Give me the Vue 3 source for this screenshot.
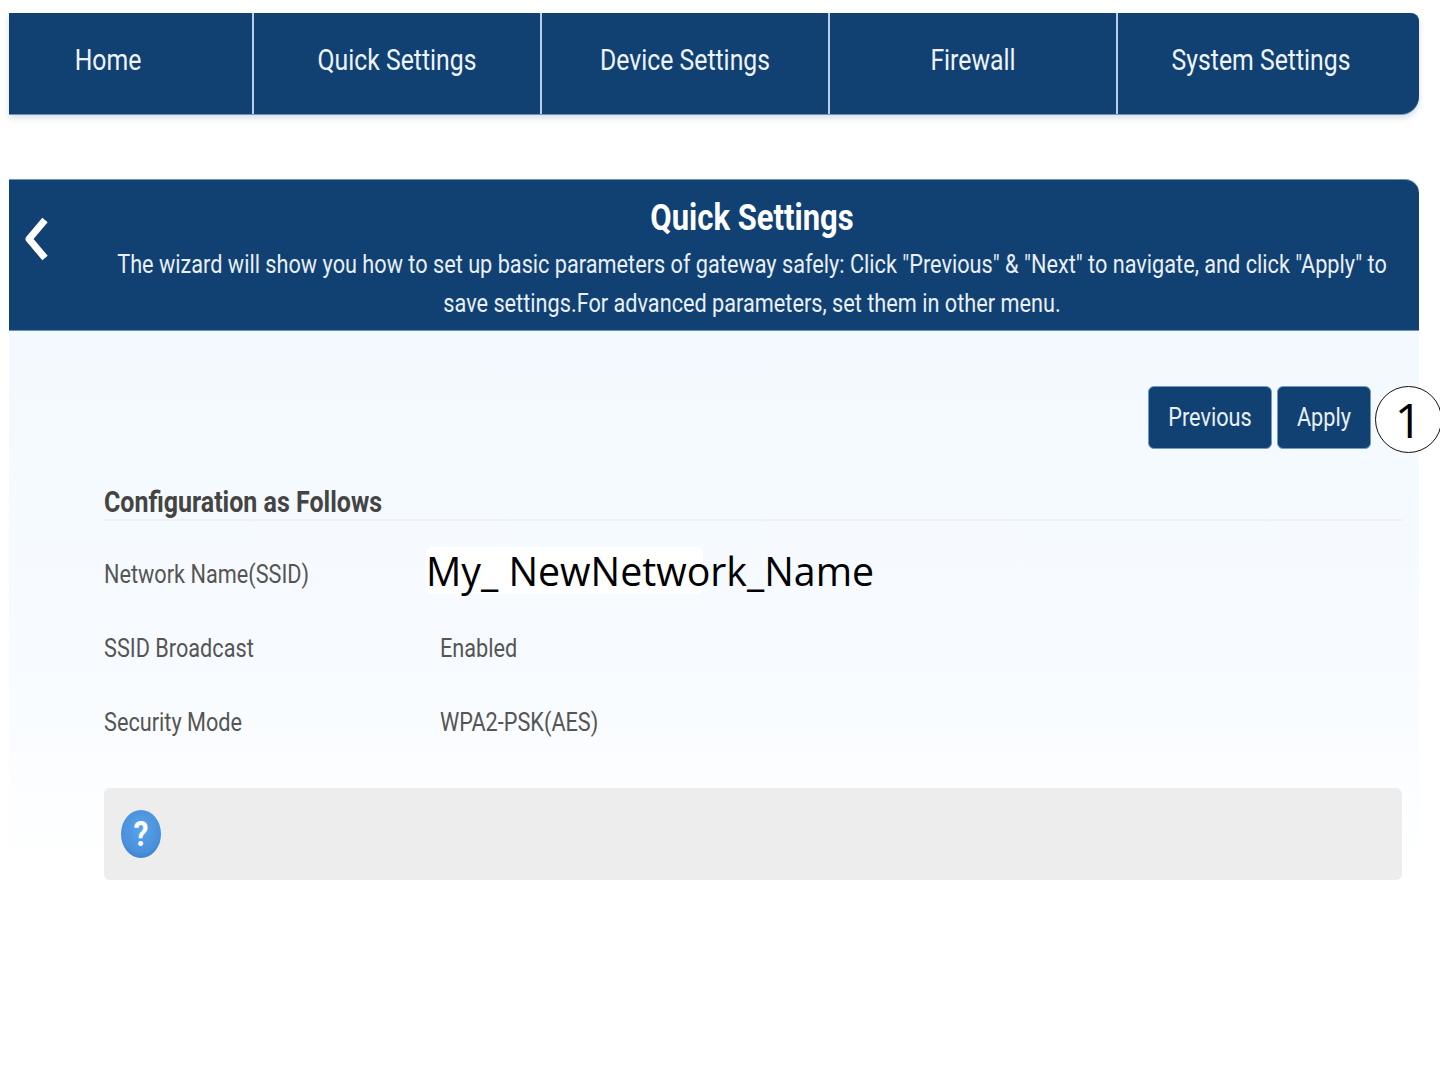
<template>
  <div class="page">
    <nav class="nav">
      <a v-for="item in menu" :key="item" class="nav-item"><span class="tall">{{ item }}</span></a>
    </nav>

    <section class="panel">
      <header class="panel-head">
        <svg class="back" width="26" height="46" viewBox="0 0 26 46">
          <polyline points="21,4 5,23 21,42" fill="none" stroke="#fff" stroke-width="7" stroke-linejoin="round" />
        </svg>
        <h1 class="panel-title"><span class="tall">Quick Settings</span></h1>
        <p class="panel-desc">
          <span class="tall">The wizard will show you how to set up basic parameters of gateway safely: Click "Previous" &amp; "Next" to navigate, and click "Apply" to</span>
          <span class="tall">save settings.For advanced parameters, set them in other menu.</span>
        </p>
      </header>

      <div class="panel-body">
        <div class="actions">
          <button class="btn btn-prev"><span class="tall">Previous</span></button>
          <button class="btn btn-apply"><span class="tall">Apply</span></button>
          <div class="callout">1</div>
        </div>

        <h2 class="section-title"><span class="tall">Configuration as Follows</span></h2>

        <div class="rows">
          <div v-for="row in rows" :key="row.label" class="row">
            <div class="row-label"><span class="tall">{{ row.label }}</span></div>
            <div class="row-value"><span class="tall">{{ row.value }}</span></div>
            <div v-if="row.ssid" class="ssid">
              <span class="ssid-patch"></span>
              <span class="ssid-text">My_ NewNetwork_Name</span>
            </div>
          </div>
        </div>

        <div class="help">
          <svg width="42" height="50" viewBox="0 0 42 50">
            <defs>
              <radialGradient id="helpFill" cx="50%" cy="40%" r="60%">
                <stop offset="0%" stop-color="#5aa3ea" />
                <stop offset="80%" stop-color="#4a90dc" />
                <stop offset="100%" stop-color="#3f82cd" />
              </radialGradient>
            </defs>
            <ellipse cx="21" cy="25" rx="20" ry="24" fill="url(#helpFill)" />
            <text transform="translate(21 37) scale(1 1.17)" text-anchor="middle" class="help-mark">?</text>
          </svg>
        </div>
      </div>
    </section>
  </div>
</template>

<script setup>
const menu = ['Home', 'Quick Settings', 'Device Settings', 'Firewall', 'System Settings'];

const rows = [
  { label: 'Network Name(SSID)', value: '', ssid: true },
  { label: 'SSID Broadcast', value: 'Enabled' },
  { label: 'Security Mode', value: 'WPA2-PSK(AES)' }
];
</script>

<style>
html, body {
  margin: 0;
  background: #fff;
}
</style>

<style scoped>
.page {
  width: 1440px;
  height: 1080px;
  overflow: hidden;
  padding: 13px 21px 0 9px;
  box-sizing: border-box;
  font-family: Roboto, sans-serif;
}

/* the source image is stretched vertically, so text gets a small scaleY */
.tall {
  display: inline-block;
  transform: scaleY(1.17);
}

.nav {
  display: flex;
  height: 101px;
  background: #114173;
  border-radius: 0 8px 18px 0;
  box-shadow: 0 1px 0 #6f94b9, 0 4px 6px rgba(20, 50, 90, 0.16);
  overflow: hidden;
}

.nav-item {
  flex: 0 0 288px;
  box-sizing: border-box;
  display: flex;
  align-items: center;
  justify-content: center;
  padding-bottom: 7px;
  color: #eef4fa;
  font-size: 24.8px;
  border-right: 2px solid #b9cfe4;
}

.nav-item:first-child {
  flex-basis: 245px;
  padding-right: 45px;
}

.nav-item:last-child {
  border-right: 0;
  flex: 1;
  padding-right: 15px;
}

.panel {
  margin-top: 65px;
}

.panel-head {
  position: relative;
  height: 152px;
  box-sizing: border-box;
  padding: 18px 32px 0 108px;
  background: #114173;
  border-radius: 0 14px 0 0;
  border-top: 1px solid #6f94b9;
  border-bottom: 1px solid #6f94b9;
  color: #fff;
  text-align: center;
}

.back {
  position: absolute;
  left: 15px;
  top: 36px;
}

.panel-title {
  margin: 0;
  font-size: 31px;
  line-height: 40px;
  font-weight: 700;
}

.panel-desc {
  margin: 7px 0 0;
  font-size: 21.7px;
  line-height: 39px;
  color: #e8eff6;
  white-space: nowrap;
}

.panel-desc .tall {
  display: block;
}

.panel-body {
  height: 549px;
  box-sizing: border-box;
  padding: 55px 17px 0 95px;
  background: linear-gradient(#f3f9ff 0%, #f7fbff 60%, #ffffff 100%);
}

.actions {
  position: relative;
  display: flex;
  justify-content: flex-end;
  gap: 5px;
  padding-right: 31px;
}

.btn {
  height: 63px;
  border: 1px solid #6f9cc6;
  border-radius: 6px;
  background: #114173;
  color: #e8eff6;
  font-family: inherit;
  font-size: 21.7px;
  padding: 0;
}

.btn-prev {
  width: 124px;
}

.btn-apply {
  width: 94px;
}

.callout {
  position: absolute;
  right: -40px;
  top: 0;
  width: 67px;
  height: 67px;
  box-sizing: border-box;
  border: 1px solid #111;
  border-radius: 50%;
  background: #fff;
  display: flex;
  align-items: center;
  justify-content: center;
  font-family: "Open Sans", sans-serif;
  font-size: 48px;
  color: #000;
}

.section-title {
  margin: 37px 0 0;
  height: 33px;
  border-bottom: 2px solid #eef1f4;
  font-size: 25px;
  line-height: 33px;
  font-weight: 700;
  color: #444;
}

.rows {
  padding-top: 16px;
}

.row {
  position: relative;
  display: flex;
  align-items: center;
  height: 74px;
  font-size: 21.7px;
  color: #555;
}

.row-label {
  width: 336px;
}

.ssid {
  position: absolute;
  left: 322px;
  top: 9px;
  height: 50px;
  display: flex;
  align-items: center;
}

.ssid-patch {
  position: absolute;
  left: 0;
  top: 1px;
  width: 277px;
  height: 47px;
  background: #fff;
  border-radius: 6px;
}

.ssid-text {
  position: relative;
  font-family: "Open Sans", sans-serif;
  font-size: 39.3px;
  color: #000;
  white-space: nowrap;
}

.help {
  margin-top: 29px;
  height: 92px;
  box-sizing: border-box;
  padding-left: 16px;
  display: flex;
  align-items: center;
  background: #ededed;
  border-radius: 6px;
}

.help-mark {
  font-family: Roboto, sans-serif;
  font-size: 30px;
  font-weight: 700;
  fill: #fff;
}
</style>
